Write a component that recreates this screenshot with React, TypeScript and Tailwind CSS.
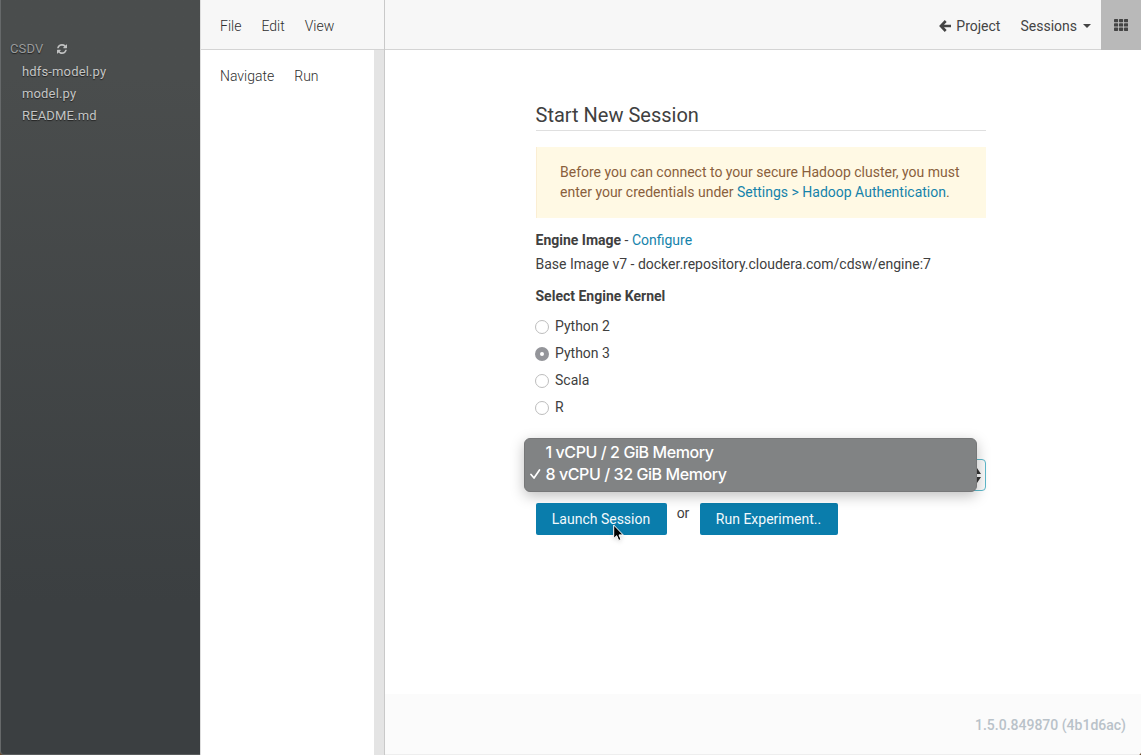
const files = ["hdfs-model.py", "model.py", "README.md"];
const kernels = ["Python 2", "Python 3", "Scala", "R"];

function RefreshIcon() {
  return (
    <svg viewBox="0 0 1536 1536" className="h-[10px] w-[10px]" fill="currentColor">
      <path d="M1511 928q0 5-1 7-64 268-268 434.500T764 1536q-146 0-282.500-55T238 1324l-129 129q-19 19-45 19t-45-19-19-45V960q0-26 19-45t45-19h448q26 0 45 19t19 45-19 45l-137 137q71 66 161 102t187 36q134 0 250-65t186-179q11-17 53-117 8-23 30-23h192q13 0 22.500 9.500t9.500 22.500zm25-800v448q0 26-19 45t-45 19h-448q-26 0-45-19t-19-45 19-45l138-138Q969 256 768 256q-134 0-250 65T332 500q-11 17-53 117-8 23-30 23H50q-13 0-22.500-9.500T18 608v-7q65-268 270-434.500T768 0q146 0 284 55.500T1297 212l130-129q19-19 45-19t45 19 19 45z" />
    </svg>
  );
}

function ArrowLeftIcon() {
  return (
    <svg viewBox="0 0 12 12" className="h-[12px] w-[12px]" fill="none" stroke="currentColor" strokeWidth="2.600">
      <path d="M6.700 1L1.900 6l4.800 5M2 6h10" />
    </svg>
  );
}

function GridIcon() {
  return (
    <svg viewBox="0 0 14 12" className="h-[12px] w-[14px]" fill="currentColor">
      {[0, 5, 10].map((x) =>
        [0, 4.3, 8.6].map((y) => <rect key={`${x}-${y}`} x={x} y={y} width="4.100" height="3.300" rx=".7" />)
      )}
    </svg>
  );
}

function Sidebar() {
  return (
    <aside className="flex w-[200px] shrink-0 flex-col rounded-bl-[4px] border-b border-l border-b-[#595c5d] border-l-[#66696a] bg-linear-to-b from-[#4a4d4d] from-10% to-[#3b3f41] to-80% pt-[38px] text-[13px] tracking-[0.15px] text-[#c4c5c5] [text-shadow:0_1px_1px_#222]">
      <div className="flex h-[22px] items-center pl-[9px] text-[#9a9c9c]">
        <span className="w-[47px]">CSDV</span>
        <span className="text-[#c0c1c1]"><RefreshIcon /></span>
      </div>
      <ul className="pl-[21px]">
        {files.map((f) => (
          <li key={f} className="h-[22px] leading-[23px]">{f}</li>
        ))}
      </ul>
    </aside>
  );
}

function EditorPanel() {
  return (
    <section className="flex w-[185px] shrink-0 flex-col border-r border-l border-r-[#c9c9c9] border-l-[#dedede] text-sm font-light text-[#2e2e2e]">
      <div className="flex h-[50px] shrink-0 items-center gap-5 border-b border-[#d4d4d4] bg-[#f7f7f7] pt-[2px] pl-[19px]">
        <span>File</span>
        <span>Edit</span>
        <span>View</span>
      </div>
      <div className="flex min-h-0 flex-1 justify-between">
        <div className="flex h-[51px] items-center gap-5 pl-[19px]">
          <span>Navigate</span>
          <span>Run</span>
        </div>
        <div className="w-[10px] bg-[#e4e4e4]" />
      </div>
    </section>
  );
}

function TopBar() {
  return (
    <header className="flex h-[50px] shrink-0 justify-end bg-[#f7f7f7] text-sm text-[#444]">
      <div className="flex flex-1 items-center justify-end gap-5 border-b border-[#d4d4d4] pt-[2px] pr-[10px]">
        <span className="flex items-center gap-[5px]">
          <ArrowLeftIcon />
          Project
        </span>
        <span className="flex items-center gap-[6px]">
          Sessions
          <svg viewBox="0 0 8 4" className="h-[4px] w-[8px]" fill="currentColor">
            <path d="M0 0h8L4 4z" />
          </svg>
        </span>
      </div>
      <div className="flex w-[40px] items-center justify-center bg-[#b9b9b9]">
        <GridIcon />
      </div>
    </header>
  );
}

function Alert() {
  return (
    <div className="mt-4 h-[71px] border-l border-[#fbeed3] bg-[#fff9e4] pt-[15px] pl-[23.5px] leading-[20px] text-[#8a5f3c]">
      <p className="whitespace-nowrap">Before you can connect to your secure Hadoop cluster, you must</p>
      <p className="whitespace-nowrap">
        enter your credentials under <span className="text-[#1583ab]">Settings &gt; Hadoop Authentication</span>.
      </p>
    </div>
  );
}

function KernelOption({ label, selected }: { label: string; selected: boolean }) {
  return (
    <label className="flex h-[27px] items-center gap-[6.5px]">
      {selected ? (
        <span className="mt-[2px] -ml-px flex h-[14px] w-[14px] items-center justify-center rounded-full bg-[#94959a]">
          <span className="h-[4px] w-[4px] rounded-full bg-white" />
        </span>
      ) : (
        <span className="mt-[2px] -ml-px h-[14px] w-[14px] rounded-full border border-[#bdbdbd] bg-white" />
      )}
      {label}
    </label>
  );
}

function ProfileSelect() {
  return (
    <div className="relative mt-[39px] h-[32px] rounded-[4px] border border-[#5fb9cb] bg-[#fafafa]">
      <svg viewBox="0 0 8 15" className="absolute top-[8px] right-[4px] h-[15px] w-[8px]" fill="#333">
        <path d="M4 0l4 6H0zM4 15l4-6H0z" />
      </svg>
      <div className="absolute -top-[22px] -left-[13px] h-[54px] w-[453px] rounded-[6px] border border-[#767778] bg-[#818384] pt-[2px] font-['Inter','Liberation_Sans',sans-serif] text-[16px] font-medium tracking-[-0.42px] text-white shadow-[0_4px_14px_rgba(0,0,0,0.25)]">
        <div className="h-[22px] pl-[21px] leading-[23px]">1 vCPU / 2 GiB Memory</div>
        <div className="flex h-[22px] items-center leading-[23px]">
          <span className="flex w-[21px] pl-[5px]">
            <svg viewBox="0 0 11 10" className="h-[10px] w-[11px]" fill="none" stroke="currentColor" strokeWidth="1.7" strokeLinecap="round" strokeLinejoin="round">
              <path d="M1 5.500L4 9l5.500-8" />
            </svg>
          </span>
          8 vCPU / 32 GiB Memory
        </div>
      </div>
    </div>
  );
}

function Actions() {
  return (
    <div className="mt-3 flex text-sm">
      <button className="relative h-[32px] w-[131px] rounded-[2px] bg-[#0a7dac] text-[#f2f9fc]">
        Launch Session
        <svg viewBox="0 0 12 18" className="absolute top-[21px] left-[77px] h-[18px] w-[12px] drop-shadow-sm" fill="#000" stroke="#fff" strokeWidth="1">
          <path d="M.7 1v13.500l3-2.800 2 4.800 2.300-1-2-4.600h4.200z" />
        </svg>
      </button>
      <span className="w-[33px] text-center leading-[20px]">or</span>
      <button className="h-[32px] w-[138px] rounded-[2px] bg-[#0a7dac] text-[#f2f9fc]">Run Experiment..</button>
    </div>
  );
}

export default function App() {
  return (
    <div className="flex h-[755px] w-[1141px] overflow-hidden bg-[#6a4a2c] font-[Roboto,'Liberation_Sans',sans-serif]">
      <Sidebar />
      <div className="flex min-w-0 flex-1 overflow-hidden rounded-br-[4px] bg-white">
        <EditorPanel />
        <div className="flex min-w-0 flex-1 flex-col">
          <TopBar />
          <main className="ml-[150.5px] w-[450.5px] flex-1 pt-[50px] text-sm text-[#404040]">
            <h1 className="h-[31px] border-b border-[#dfdfdf] text-[20px] leading-[30px]">Start New Session</h1>
            <Alert />
            <p className="mt-[11px] leading-[22px]">
              <b className="font-bold">Engine Image</b> - <span className="text-[#1583ab]">Configure</span>
            </p>
            <p className="mt-[2px] leading-[22px]">Base Image v7 - docker.repository.cloudera.com/cdsw/engine:7</p>
            <p className="mt-[10px] leading-[22px] font-bold">Select Engine Kernel</p>
            <div className="mt-[5px]">
              {kernels.map((k) => (
                <KernelOption key={k} label={k} selected={k === "Python 3"} />
              ))}
            </div>
            <ProfileSelect />
            <Actions />
          </main>
          <footer className="flex h-[61px] shrink-0 items-center justify-end border-b border-[#eee] bg-[#fbfbfb] pt-[2px] pr-[15px] text-sm font-medium text-[#b9c2c9]">
            1.5.0.849870 (4b1d6ac)
          </footer>
        </div>
      </div>
    </div>
  );
}
